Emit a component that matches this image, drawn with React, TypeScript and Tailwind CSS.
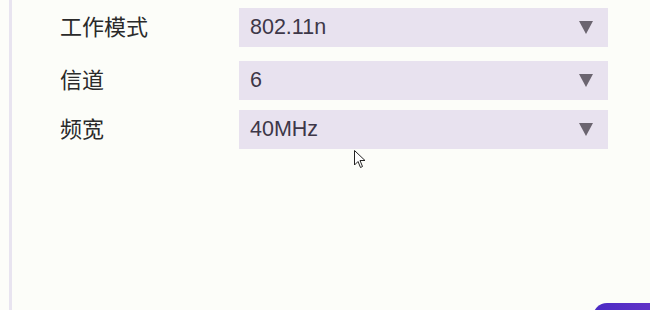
import React from 'react';

const rows = [
  { label: '工作模式', value: '802.11n', mt: 'mt-0' },
  { label: '信道', value: '6', mt: 'mt-[14px]' },
  { label: '频宽', value: '40MHz', mt: 'mt-[10px]' },
];

function Arrow() {
  return (
    <svg width="14" height="13" viewBox="0 0 14 13" className="shrink-0">
      <path d="M0 0 H14 L7 13 Z" fill="#6b6570" />
    </svg>
  );
}

export default function App() {
  return (
    <div
      className="relative w-[650px] h-[310px] overflow-hidden bg-[#fcfdf9] text-[#2b2b2b]"
      style={{ fontFamily: '"Liberation Sans", "Noto Sans CJK SC", sans-serif' }}
    >
      <div className="flex h-full">
        <div className="ml-[9px] w-[3px] h-full bg-[#e8e4f0]" />
        <div className="flex flex-col pt-[8px] pl-[48px]">
          {rows.map(r => (
            <div key={r.label} className={`flex items-center ${r.mt}`}>
              <span className="w-[179px] text-[22px] leading-none text-[#2a2a2a]">{r.label}</span>
              <div className="flex items-center justify-between w-[369px] h-[39px] bg-[#e8e2ef] pl-[11px] pr-[15px]">
                <span className="text-[21.5px] leading-none text-[#3d3748]">{r.value}</span>
                <Arrow />
              </div>
            </div>
          ))}
        </div>
      </div>
      <svg width="12" height="19" viewBox="0 0 12 19" className="absolute left-[354px] top-[150px]">
        <path d="M0.5 0.5 V15 L4 11.5 L6.5 17.5 L8.5 16.5 L6 10.5 H11 Z" fill="#fff" stroke="#222" strokeWidth="1" />
      </svg>
      <div className="absolute left-[593px] top-[303px] w-[80px] h-[30px] rounded-tl-[14px] bg-gradient-to-r from-[#4a2bc4] to-[#6a35c8]" />
    </div>
  );
}
